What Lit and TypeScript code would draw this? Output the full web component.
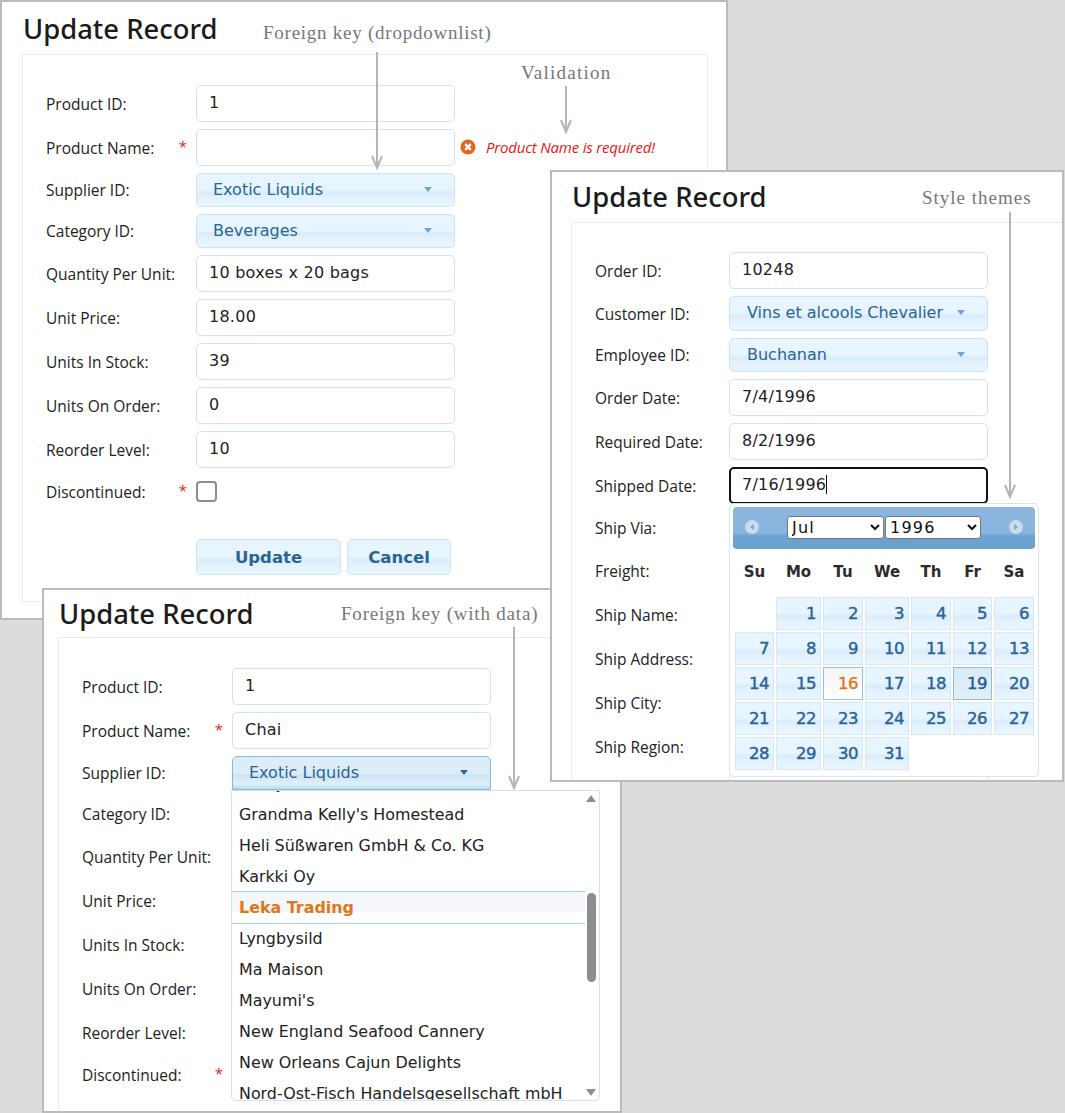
import { LitElement, html, css, svg } from "lit";
import { customElement } from "lit/decorators.js";

type Row = { label: string; star?: boolean; type?: string; value?: string; error?: string };

const productRows = (name: string): Row[] => [
  { label: "Product ID:", value: "1" },
  { label: "Product Name:", star: true, value: name, error: name ? undefined : "Product Name is required!" },
  { label: "Supplier ID:", type: "select", value: "Exotic Liquids" },
  { label: "Category ID:", type: "select", value: "Beverages" },
  { label: "Quantity Per Unit:", value: "10 boxes x 20 bags" },
  { label: "Unit Price:", value: "18.00" },
  { label: "Units In Stock:", value: "39" },
  { label: "Units On Order:", value: "0" },
  { label: "Reorder Level:", value: "10" },
  { label: "Discontinued:", star: true, type: "check" },
];

const orderRows: Row[] = [
  { label: "Order ID:", value: "10248" },
  { label: "Customer ID:", type: "select", value: "Vins et alcools Chevalier" },
  { label: "Employee ID:", type: "select", value: "Buchanan" },
  { label: "Order Date:", value: "7/4/1996" },
  { label: "Required Date:", value: "8/2/1996" },
  { label: "Shipped Date:", type: "focus", value: "7/16/1996" },
  { label: "Ship Via:", type: "select", value: "" },
  { label: "Freight:", value: "" },
  { label: "Ship Name:", value: "" },
  { label: "Ship Address:", value: "" },
  { label: "Ship City:", value: "" },
  { label: "Ship Region:", value: "" },
  { label: "", value: "" },
];

const suppliers = [
  "G'day, Mate",
  "Grandma Kelly's Homestead",
  "Heli Süßwaren GmbH & Co. KG",
  "Karkki Oy",
  "Leka Trading",
  "Lyngbysild",
  "Ma Maison",
  "Mayumi's",
  "New England Seafood Cannery",
  "New Orleans Cajun Delights",
  "Nord-Ost-Fisch Handelsgesellschaft mbH",
];

const arrow = (x: number, y1: number, y2: number) => svg`
  <line x1=${x} y1=${y1} x2=${x} y2=${y2} />
  <polyline points="${x - 5},${y2 - 12} ${x},${y2} ${x + 5},${y2 - 12}" />
`;

@customElement("app-root")
export class AppRoot extends LitElement {
  static styles = css`
    :host { display: block; position: relative; width: 1065px; height: 1113px; overflow: hidden; background: #dcdcdc; font-family: "Open Sans", "Noto Sans", sans-serif; }
    .win { position: absolute; box-sizing: border-box; background: #fff; border: 2px solid #bbb; overflow: hidden; }
    .w1 { left: 0; top: 0; width: 728px; height: 620px; padding-left: 20px; }
    .w2 { left: 550px; top: 170px; width: 514px; height: 612px; padding-left: 19px; }
    .w3 { left: 42px; top: 588px; width: 580px; height: 525px; padding-left: 14px; }
    .title { font-family: "Noto Sans", "Open Sans", sans-serif; font-size: 27.4px; font-weight: 500; color: #1b1b1b; line-height: 54px; height: 52px; padding-left: 1px; white-space: nowrap; }
    .w2 .title { height: 50px; line-height: 50px; }
    .w3 .title { height: 47px; line-height: 47px; }
    .box { box-sizing: border-box; width: 686px; border: 1px solid #e6eef4; padding: 30px 0 0 23px; display: flex; flex-direction: column; gap: 7px; height: 548px; }
    .w2 .box, .w3 .box { width: 700px; height: 700px; }
    .w2 .box { padding-top: 29px; }
    .row { display: flex; align-items: center; }
    .row.short { min-height: 33px; }
    .label { box-sizing: border-box; width: 150px; flex: none; display: flex; justify-content: space-between; padding-right: 9px; font-size: 15.5px; color: #222; white-space: nowrap; }
    .w2 .label { width: 134px; }
    .star { color: #f02020; font-size: 15px; line-height: 18px; }
    .input, .select { box-sizing: border-box; width: 259px; border-radius: 5px; font-family: "DejaVu Sans", sans-serif; font-size: 16px; display: flex; align-items: center; white-space: nowrap; }
    .input { height: 37px; border: 1px solid #d3e2f0; padding: 0 0 2px 12px; color: #222; background: #fff; letter-spacing: 0.25px; }
    .input.focus { border: 2px solid #111; padding-left: 11px; }
    .caret { width: 1px; height: 19px; background: #111; }
    .select { height: 34px; border: 1px solid #cfe2f2; padding: 0 22px 2px 16px; color: #2a6496; justify-content: space-between; background: linear-gradient(#e6f5ff 0%, #e6f5ff 48%, #daecfb 58%, #e4f2fe 75%, #e9f6ff 100%); }
    .w2 .select { padding-left: 17px; }
    .w2 .row:nth-child(2) .select { height: 35px; }
    .select.open { border-color: #86b9de; border-bottom-left-radius: 0; border-bottom-right-radius: 0; background: linear-gradient(#dcedf8 0%, #dcedf8 48%, #cfe4f5 58%, #e0effb 85%, #b8d8f0 100%); }
    .tri { width: 0; height: 0; border-left: 4.5px solid transparent; border-right: 4.5px solid transparent; border-top: 5px solid #6fa6d6; }
    .select.open .tri { border-top-color: #2469a6; }
    .check { box-sizing: border-box; width: 21px; height: 21px; border: 2px solid #8d8d8d; border-radius: 4px; background: #fff; }
    .error { display: flex; align-items: center; margin-left: 5px; gap: 10px; font-size: 15px; font-style: italic; color: #f01414; white-space: nowrap; letter-spacing: -0.2px; margin-top: -2px; }
    .buttons { display: flex; gap: 6px; margin: 24px 0 0 150px; }
    .btn { box-sizing: border-box; height: 36px; border: 1px solid #cfe2f2; border-radius: 5px; display: flex; align-items: center; justify-content: center; font-family: "DejaVu Sans", sans-serif; font-weight: 700; font-size: 16.5px; color: #2a6496; background: linear-gradient(#e6f5ff 0%, #e6f5ff 48%, #daecfb 58%, #e4f2fe 75%, #e9f6ff 100%); }
    .update { width: 145px; }
    .cancel { width: 104px; }
    .note { position: absolute; font-family: "Liberation Serif", "DejaVu Serif", serif; font-size: 19px; color: #777; letter-spacing: 0.75px; white-space: nowrap; line-height: 22px; }
    .n1 { left: 261px; top: 20px; }
    .n2 { left: 519px; top: 60px; letter-spacing: 1.25px; }
    .n3 { left: 370px; top: 15px; letter-spacing: 1px; }
    .n4 { left: 297px; top: 13px; letter-spacing: 0.8px; }
    .arrows { position: absolute; left: -2px; top: -2px; width: 1065px; height: 1113px; pointer-events: none; fill: none; stroke: #b4b4b4; stroke-width: 2; }
    .cal { position: absolute; left: 177px; top: 331px; box-sizing: border-box; width: 310px; height: 274px; background: #fff; border: 1px solid #d5e4f2; border-radius: 5px; padding: 3px; }
    .cal-head { box-sizing: border-box; height: 42px; border-radius: 4px; display: flex; align-items: center; padding: 0 12px 3px; justify-content: space-between; background: linear-gradient(#8ab5de 0%, #8ab5de 60%, #6ca3d2 70%, #6aa1d1 100%); }
    .nav { width: 14px; height: 14px; border-radius: 50%; background: #c8dcee; display: flex; align-items: center; justify-content: center; }
    .nav i { width: 0; height: 0; border-top: 3px solid transparent; border-bottom: 3px solid transparent; }
    .nav.prev i { border-right: 4px solid #7fa9d1; }
    .nav.next i { border-left: 4px solid #7fa9d1; }
    .pickers { display: flex; gap: 1px; margin-top: 1px; }
    select { box-sizing: border-box; height: 23px; font-family: "DejaVu Sans", sans-serif; font-size: 16px; letter-spacing: 1.2px; background: #fff; color: #111; border: 1px solid #767676; border-radius: 3px; padding: 0; }
    .month { width: 97px; }
    .year { width: 96px; }
    .cal-grid { display: grid; grid-template-columns: 39px 45px 40px 44px 40px 39px 40px; grid-auto-rows: 33px; column-gap: 2px; row-gap: 2px; padding-left: 2px; }
    .dow { box-sizing: border-box; height: 48px; padding: 0 0 2px 2px; display: grid; grid-template-columns: 39px 45px 40px 44px 40px 39px 40px; column-gap: 2px; align-items: center; text-align: center; font-family: "DejaVu Sans", sans-serif; font-size: 15px; font-weight: 700; color: #2b2b2b; }
    .day { box-sizing: border-box; border: 1px solid #d8e8f5; display: flex; align-items: center; justify-content: flex-end; padding-right: 4px; font-family: "DejaVu Sans", sans-serif; font-size: 16.5px; font-weight: 400; letter-spacing: -0.5px; -webkit-text-stroke: 0.45px currentColor; color: #2a6496; background: linear-gradient(#e6f5ff 0%, #e6f5ff 48%, #daecfb 58%, #e4f2fe 75%, #e9f6ff 100%); }
    .day.today { background: linear-gradient(#f5f5f5, #fff); color: #e0761c; border-color: #8ec4e8; }
    .day.sel { background: linear-gradient(#d9eaf5, #e3eff6); color: #1f5e8e; border-color: #8bbde0; }
    .blank { background: none; border: none; }
    .list { position: absolute; left: 187px; top: 200px; box-sizing: border-box; width: 369px; height: 311px; background: #fff; border: 1px solid #cfe2f2; border-radius: 0 0 5px 5px; overflow: hidden; font-family: "DejaVu Sans", sans-serif; font-size: 15.9px; color: #222; }
    .items { margin-top: -23px; }
    .item { box-sizing: border-box; height: 31px; line-height: 31px; padding-left: 7px; white-space: nowrap; width: 353px; }
    .item.on { color: #e0761c; font-weight: 700; height: 33px; margin: -1px 0; border-top: 1px solid #a8cfe8; border-bottom: 1px solid #a8cfe8; background: linear-gradient(#f4f6f9 0%, #f4f6f9 65%, #fff 66%); }
    .thumb { position: absolute; left: 355px; top: 102px; width: 9px; height: 89px; border-radius: 5px; background: #8e8e8e; }
    .up, .down { position: absolute; left: 354px; width: 0; height: 0; border-left: 5.5px solid transparent; border-right: 5.5px solid transparent; }
    .up { top: 4px; border-bottom: 7px solid #8e8e8e; }
    .down { bottom: 4px; border-top: 7px solid #8e8e8e; }
  `;

  private renderRow(r: Row, open = false) {
    let control;
    if (r.type === "select") {
      control = html`<div class="select ${open ? "open" : ""}"><span>${r.value}</span><span class="tri"></span></div>`;
    } else if (r.type === "check") {
      control = html`<div class="check"></div>`;
    } else if (r.type === "focus") {
      control = html`<div class="input focus"><span>${r.value}</span><span class="caret"></span></div>`;
    } else {
      control = html`<div class="input">${r.value}</div>`;
    }
    return html`<div class="row ${r.type === "check" ? "short" : ""}">
      <div class="label"><span>${r.label}</span>${r.star ? html`<span class="star">*</span>` : ""}</div>
      ${control}
      ${r.error
        ? html`<div class="error">
            <svg width="16" height="16" viewBox="0 0 16 16">
              <circle cx="8" cy="8" r="7.5" fill="#e2661c" />
              <path d="M5.2 5.2 10.8 10.8M10.8 5.2 5.2 10.8" stroke="#fff" stroke-width="2.4" />
            </svg>
            <span>${r.error}</span>
          </div>`
        : ""}
    </div>`;
  }

  private renderCalendar() {
    const days = Array.from({ length: 31 }, (_, i) => i + 1);
    return html`<div class="cal">
      <div class="cal-head">
        <span class="nav prev"><i></i></span>
        <span class="pickers">
          <select class="month"><option>Jul</option></select>
          <select class="year"><option>1996</option></select>
        </span>
        <span class="nav next"><i></i></span>
      </div>
      <div class="dow">${["Su", "Mo", "Tu", "We", "Th", "Fr", "Sa"].map((d) => html`<span>${d}</span>`)}</div>
      <div class="cal-grid">
        <div class="blank"></div>
        ${days.map((d) => html`<div class="day ${d === 16 ? "today" : ""} ${d === 19 ? "sel" : ""}">${d}</div>`)}
      </div>
    </div>`;
  }

  render() {
    const rows1 = productRows("");
    const rows3 = productRows("Chai");
    return html`
      <section class="win w1">
        <div class="title">Update Record</div>
        <div class="box">
          ${rows1.map((r) => this.renderRow(r))}
          <div class="buttons">
            <div class="btn update">Update</div>
            <div class="btn cancel">Cancel</div>
          </div>
        </div>
        <div class="note n1">Foreign key (dropdownlist)</div>
        <div class="note n2">Validation</div>
        <svg class="arrows">${arrow(377, 52, 168)}${arrow(566, 86, 132)}</svg>
      </section>

      <section class="win w3">
        <div class="title">Update Record</div>
        <div class="box">
          ${rows3.map((r, i) => this.renderRow(r, i === 2))}
        </div>
        <div class="list">
          <div class="items">
            ${suppliers.map((s) => html`<div class="item ${s === "Leka Trading" ? "on" : ""}">${s}</div>`)}
          </div>
          <span class="up"></span>
          <span class="thumb"></span>
          <span class="down"></span>
        </div>
        <div class="note n4">Foreign key (with data)</div>
        <svg class="arrows">${arrow(472, 39, 200)}</svg>
      </section>

      <section class="win w2">
        <div class="title">Update Record</div>
        <div class="box">
          ${orderRows.map((r) => this.renderRow(r))}
        </div>
        ${this.renderCalendar()}
        <div class="note n3">Style themes</div>
        <svg class="arrows">${arrow(460, 42, 327)}</svg>
      </section>
    `;
  }
}
